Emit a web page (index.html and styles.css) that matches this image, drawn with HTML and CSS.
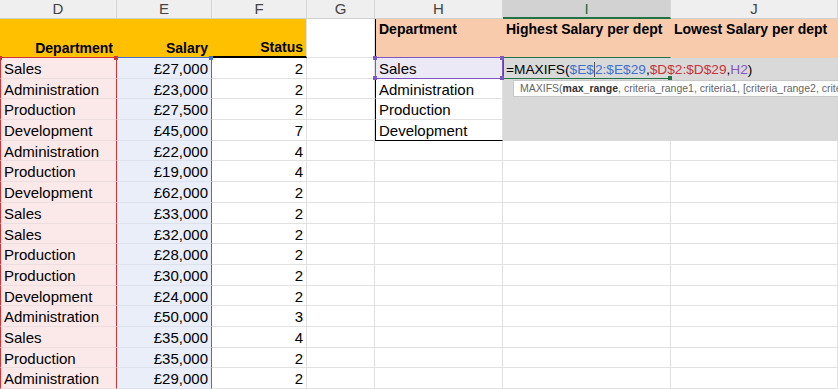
FILE: index.html
```html
<!DOCTYPE html>
<html lang="en">
<head>
    <meta charset="UTF-8">
    <meta name="viewport" content="width=device-width, initial-scale=1.0">
    <title>Salary sheet - MAXIFS</title>
    <link rel="stylesheet" href="styles.css">
</head>
<body>
    <div class="sheet">
        <!-- column letters -->
        <div class="hd">D</div>
        <div class="hd">E</div>
        <div class="hd">F</div>
        <div class="hd">G</div>
        <div class="hd">H</div>
        <div class="hd hd-active">I</div>
        <div class="hd">J</div>

        <!-- row 1: headings -->
        <div class="c yellow title-bottom range-d-top">Department</div>
        <div class="c yellow title-bottom range-e-top">Salary</div>
        <div class="c yellow title-bottom status-top">Status</div>
        <div class="c"></div>
        <div class="c peach box range-h-top">Department</div>
        <div class="c peach edit-top">Highest Salary per dept</div>
        <div class="c peach">Lowest Salary per dept</div>

        <!-- row 2 -->
        <div class="c dcol">Sales<span class="handle red tl"></span><span class="handle red tr"></span></div>
        <div class="c ecol">£27,000<span class="handle blue tr"></span></div>
        <div class="c num">2</div>
        <div class="c"></div>
        <div class="c sel-h">Sales<span class="handle purple tl"></span><span class="handle purple tr"></span><span class="handle purple bl"></span><span class="handle purple br"></span></div>
        <div class="c edit">
            <span class="formula">=MAXIFS(<span class="ref-e">$E$<span class="caret"></span>2:$E$29</span>,<span class="ref-d">$D$2:$D$29</span>,<span class="ref-h">H2</span>)</span>
            <span class="tip">MAXIFS(<b>max_range</b>, criteria_range1, criteria1, [criteria_range2, criteria2], ...)</span>
            <span class="handle green br"></span>
        </div>
        <div class="c fill"></div>

        <!-- row 3 -->
        <div class="c dcol">Administration</div>
        <div class="c ecol">£23,000</div>
        <div class="c num">2</div>
        <div class="c"></div>
        <div class="c box">Administration</div>
        <div class="c fill"></div>
        <div class="c fill"></div>

        <!-- row 4 -->
        <div class="c dcol">Production</div>
        <div class="c ecol">£27,500</div>
        <div class="c num">2</div>
        <div class="c"></div>
        <div class="c box">Production</div>
        <div class="c fill"></div>
        <div class="c fill"></div>

        <!-- row 5 -->
        <div class="c dcol">Development</div>
        <div class="c ecol">£45,000</div>
        <div class="c num">7</div>
        <div class="c"></div>
        <div class="c box box-end">Development</div>
        <div class="c fill"></div>
        <div class="c fill"></div>

        <!-- rows 6+ -->
        <div class="c dcol">Administration</div>
        <div class="c ecol">£22,000</div>
        <div class="c num">4</div>
        <div class="c"></div><div class="c"></div><div class="c"></div><div class="c"></div>

        <div class="c dcol">Production</div>
        <div class="c ecol">£19,000</div>
        <div class="c num">4</div>
        <div class="c"></div><div class="c"></div><div class="c"></div><div class="c"></div>

        <div class="c dcol">Development</div>
        <div class="c ecol">£62,000</div>
        <div class="c num">2</div>
        <div class="c"></div><div class="c"></div><div class="c"></div><div class="c"></div>

        <div class="c dcol">Sales</div>
        <div class="c ecol">£33,000</div>
        <div class="c num">2</div>
        <div class="c"></div><div class="c"></div><div class="c"></div><div class="c"></div>

        <div class="c dcol">Sales</div>
        <div class="c ecol">£32,000</div>
        <div class="c num">2</div>
        <div class="c"></div><div class="c"></div><div class="c"></div><div class="c"></div>

        <div class="c dcol">Production</div>
        <div class="c ecol">£28,000</div>
        <div class="c num">2</div>
        <div class="c"></div><div class="c"></div><div class="c"></div><div class="c"></div>

        <div class="c dcol">Production</div>
        <div class="c ecol">£30,000</div>
        <div class="c num">2</div>
        <div class="c"></div><div class="c"></div><div class="c"></div><div class="c"></div>

        <div class="c dcol">Development</div>
        <div class="c ecol">£24,000</div>
        <div class="c num">2</div>
        <div class="c"></div><div class="c"></div><div class="c"></div><div class="c"></div>

        <div class="c dcol">Administration</div>
        <div class="c ecol">£50,000</div>
        <div class="c num">3</div>
        <div class="c"></div><div class="c"></div><div class="c"></div><div class="c"></div>

        <div class="c dcol">Sales</div>
        <div class="c ecol">£35,000</div>
        <div class="c num">4</div>
        <div class="c"></div><div class="c"></div><div class="c"></div><div class="c"></div>

        <div class="c dcol">Production</div>
        <div class="c ecol">£35,000</div>
        <div class="c num">2</div>
        <div class="c"></div><div class="c"></div><div class="c"></div><div class="c"></div>

        <div class="c dcol">Administration</div>
        <div class="c ecol">£29,000</div>
        <div class="c num">2</div>
        <div class="c"></div><div class="c"></div><div class="c"></div><div class="c"></div>
    </div>
</body>
</html>
```

FILE: styles.css
```css
* {
    box-sizing: border-box;
}
body {
    margin: 0;
    overflow: hidden;
    background-color: white;
    font-family: "Liberation Sans", Arial, sans-serif;
}
.sheet {
    display: grid;
    grid-template-columns: 117px 95px 95px 68px 128px 168px 167px;
    grid-template-rows: 19px 39px;
    grid-auto-rows: 20.7px;
    width: 838px;
}
.hd {
    background-color: #efefef;
    border-right: 1px solid #d6d6d6;
    border-bottom: 1px solid #d0d0d0;
    text-align: center;
    font-size: 15px;
    line-height: 18px;
    color: #444;
}
.hd-active {
    background-color: #d2d2d2;
    color: #1e6b3c;
    border-bottom: 2px solid #217346;
}
.c {
    position: relative;
    border-right: 1px solid #e1e1e1;
    border-bottom: 1px solid #e1e1e1;
    padding: 1px 3px 0;
    font-size: 15px;
    line-height: 19px;
    white-space: nowrap;
    color: #000;
}
.num {
    text-align: right;
}
.yellow {
    background-color: #ffc000;
    border-right-color: #ffc000;
    border-bottom-color: #ffc000;
}
.title-bottom {
    display: flex;
    align-items: flex-end;
    justify-content: flex-end;
    padding-bottom: 1px;
    font-size: 14px;
    font-weight: bold;
    line-height: 16px;
}
.range-d-top {
    border-bottom-color: #d13438;
}
.range-e-top {
    border-bottom-color: #4472c4;
}
.status-top {
    border-right-color: #e1e1e1;
    border-bottom: 2px solid #000;
}
.peach {
    background-color: #f8cbad;
    border-right-color: #f8cbad;
    border-bottom-color: #f8cbad;
    padding-top: 2px;
    font-size: 14px;
    font-weight: bold;
    line-height: 17px;
}
.range-h-top {
    border-bottom-color: #7e57c2;
}
.edit-top {
    border-bottom-color: #217346;
}
.dcol {
    background-color: #fbe8e8;
    border-left: 1px solid #d13438;
    border-right-color: #d13438;
    border-bottom-color: #ecdede;
}
.ecol {
    background-color: #e9eef8;
    border-right-color: #4472c4;
    border-bottom-color: #dce2ec;
    text-align: right;
}
.box {
    border-left: 1px solid #000;
}
.box-end {
    border-bottom-color: #000;
}
.sel-h {
    background-color: #ece9f6;
    border-left: 1px solid #7e57c2;
    border-right-color: #7e57c2;
    border-bottom-color: #7e57c2;
}
.fill {
    background-color: #d9d9d9;
    border-right-color: #d9d9d9;
    border-bottom-color: #d9d9d9;
}
.edit {
    z-index: 2;
    background-color: #d9d9d9;
    border-left: 1px solid #217346;
    border-right-color: #d9d9d9;
    border-bottom-color: #217346;
    padding-left: 2px;
}
.formula {
    font-size: 13.7px;
}
.ref-e {
    color: #3f72d0;
}
.ref-d {
    color: #c8343c;
}
.ref-h {
    color: #8457c0;
}
.caret {
    display: inline-block;
    width: 0;
    height: 15px;
    vertical-align: -3px;
    border-left: 1px solid #555;
}
.tip {
    position: absolute;
    left: 9px;
    top: calc(100% + 2px);
    height: 17px;
    padding: 0 6px;
    background-color: white;
    border: 1px solid #c8c8c8;
    font-size: 10.5px;
    line-height: 15px;
    color: #666;
}
.tip b {
    color: #333;
}
.handle {
    position: absolute;
    z-index: 3;
    width: 4px;
    height: 4px;
}
.handle.red {
    background-color: #d13438;
}
.handle.blue {
    background-color: #4472c4;
}
.handle.purple {
    background-color: #7e57c2;
}
.handle.green {
    background-color: #217346;
}
.tl {
    top: -2px;
    left: -3px;
}
.tr {
    top: -2px;
    right: -2px;
}
.bl {
    bottom: -2px;
    left: -3px;
}
.br {
    bottom: -2px;
    right: -2px;
}
```
